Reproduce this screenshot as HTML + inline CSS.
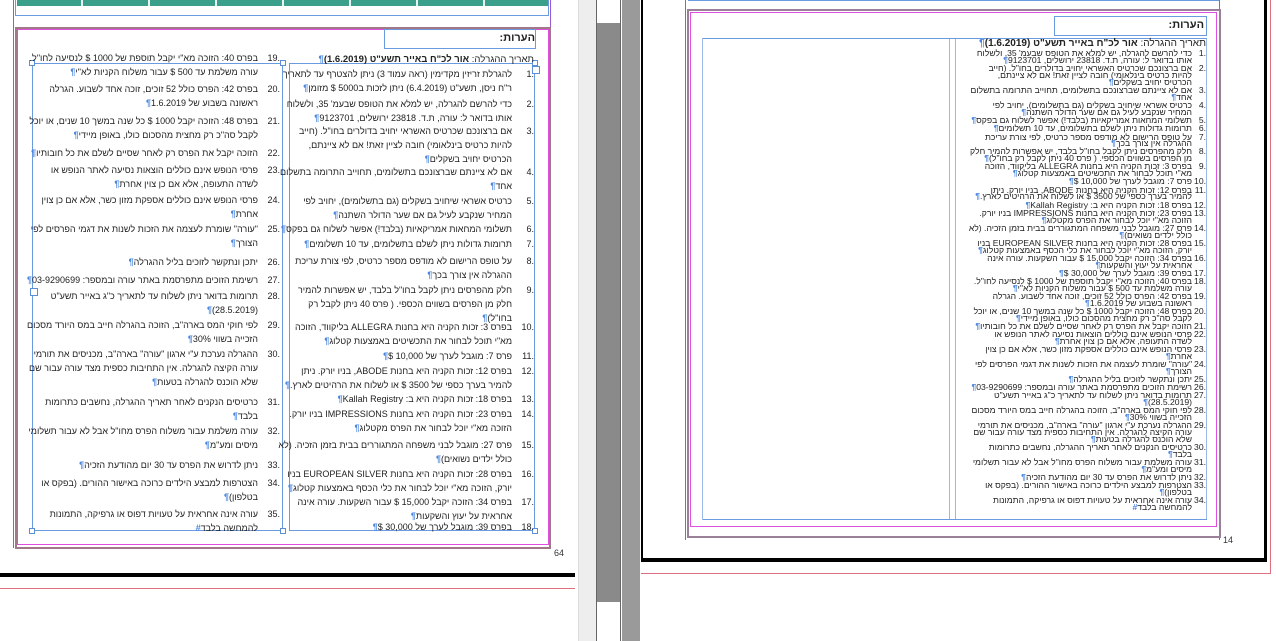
<!DOCTYPE html>
<html><head><meta charset="utf-8">
<style>
*{margin:0;padding:0;box-sizing:border-box}
body{width:1276px;height:641px;overflow:hidden;background:#fff;position:relative;font-family:"Liberation Sans","DejaVu Sans",sans-serif;color:#222}
.a{position:absolute}
.it{position:absolute;direction:rtl;text-align:right;font-size:9px;line-height:14px;white-space:nowrap;padding-right:22px}
.it b.n{position:absolute;right:0;top:0;font-weight:normal;direction:ltr}
.p{color:#4a86e0;font-weight:bold}
.hd{font-weight:bold}
.flow{position:absolute;direction:rtl;text-align:right;font-size:8.6px;white-space:nowrap}
.flow .r{position:relative;padding-right:14px;line-height:6.8px;margin-top:1.4px}
.flow .r b.n{position:absolute;right:0;top:0;font-weight:normal;direction:ltr}
.h{position:absolute;width:6px;height:6px;border:1px solid #5b8fd8;background:#fff}
</style></head><body>

<!-- ===== LEFT PANEL ===== -->
<div class="a" style="left:15px;top:0;width:534px;height:16px;border:1px solid #6a9ae0;border-top:none"></div>
<div class="a" style="left:17px;top:0;width:531px;height:6px;background:#3aa08a"></div>
<div class="a" style="left:81px;top:0;width:2px;height:6px;background:#e8f4f0"></div>
<div class="a" style="left:148px;top:0;width:2px;height:6px;background:#e8f4f0"></div>
<div class="a" style="left:215px;top:0;width:2px;height:6px;background:#e8f4f0"></div>
<div class="a" style="left:282px;top:0;width:2px;height:6px;background:#e8f4f0"></div>
<div class="a" style="left:349px;top:0;width:2px;height:6px;background:#e8f4f0"></div>
<div class="a" style="left:416px;top:0;width:2px;height:6px;background:#e8f4f0"></div>
<div class="a" style="left:483px;top:0;width:2px;height:6px;background:#e8f4f0"></div>
<div class="a" style="left:13px;top:0;width:1px;height:548px;background:#9b59d0"></div>
<div class="a" style="left:550px;top:0;width:1px;height:548px;background:#9b59d0"></div>
<div class="a" style="left:15px;top:27px;width:536px;height:522px;border:2px solid #a07888"></div>
<div class="a" style="left:17px;top:29px;width:532px;height:516px;border:1px solid #e050e0"></div>
<div class="a" style="left:384px;top:29px;width:152px;height:20px;border:1px solid #6a9ae0"></div>
<div class="a" style="left:475px;top:32px;font-size:11px;font-weight:bold;direction:rtl;width:60px;text-align:right">הערות:</div>
<!-- text frames -->
<div class="a" style="left:32px;top:63px;width:251px;height:468px;border:1px solid #6a9ae0"></div>
<div class="a" style="left:289px;top:63px;width:246px;height:468px;border:1px solid #6a9ae0"></div>
<div class="h" style="left:29px;top:60px"></div><div class="h" style="left:280px;top:60px"></div><div class="h" style="left:532px;top:60px"></div>
<div class="h" style="left:29px;top:528px"></div><div class="h" style="left:280px;top:528px"></div><div class="h" style="left:532px;top:528px"></div>
<div class="h" style="left:30px;top:288px;width:8px;height:8px"></div>
<div class="h" style="left:532px;top:66px;width:8px;height:8px"></div>
<div class="a" style="left:554px;top:548px;font-size:9px;color:#333">64</div>
<div class="a" style="left:0;top:573px;width:575px;height:4px;background:#000"></div>
<div class="a" style="left:0;top:588px;width:575px;height:1px;background:#e07080"></div>

<!-- right column (left page) -->
<div class="it" style="right:742px;top:53px;padding-right:0;font-size:9.5px">תאריך ההגרלה: <span class="hd">אור לכ"ח באייר תשע"ט (1.6.2019)</span><span class="p">¶</span></div>
<div class="it" style="right:742px;top:67px"><b class="n">1.</b>להגרלת זריזין מקדימין (ראה עמוד 3) ניתן להצטרף עד לתאריך<br>ר"ח ניסן, תשע"ט (6.4.2019) ניתן לזכות ב5000 $ מזומן<span class="p">¶</span></div>
<div class="it" style="right:742px;top:97px"><b class="n">2.</b>כדי להרשם להגרלה, יש למלא את הטופס שבעמ' 35, ולשלוח<br>אותו בדואר ל: עורה, ת.ד. 23818 ירושלים, 9123701<span class="p">¶</span></div>
<div class="it" style="right:742px;top:124px"><b class="n">3.</b>אם ברצונכם שכרטיס האשראי יחויב בדולרים בחו"ל. (חייב<br>להיות כרטיס בינלאומי) חובה לציין זאת! אם לא ציינתם,<br>הכרטיס יחויב בשקלים<span class="p">¶</span></div>
<div class="it" style="right:742px;top:165px"><b class="n">4.</b>אם לא ציינתם שברצונכם בתשלומים, תחוייב התרומה בתשלום<br>אחד<span class="p">¶</span></div>
<div class="it" style="right:742px;top:194px"><b class="n">5.</b>כרטיס אשראי שיחויב בשקלים (גם בתשלומים), יחויב לפי<br>המחיר שנקבע לעיל גם אם שער הדולר השתנה<span class="p">¶</span></div>
<div class="it" style="right:742px;top:222px"><b class="n">6.</b>תשלומי המחאות אמריקאיות (בלבד!) אפשר לשלוח גם בפקס<span class="p">¶</span></div>
<div class="it" style="right:742px;top:237px"><b class="n">7.</b>תרומות גדולות ניתן לשלם בתשלומים, עד 10 תשלומים<span class="p">¶</span></div>
<div class="it" style="right:742px;top:254px"><b class="n">8.</b>על טופס הרישום לא מודפס מספר כרטיס, לפי צורת עריכת<br>ההגרלה אין צורך בכך<span class="p">¶</span></div>
<div class="it" style="right:742px;top:283px"><b class="n">9.</b>חלק מהפרסים ניתן לקבל בחו"ל בלבד, יש אפשרות להמיר<br>חלק מן הפרסים בשווים הכספי. ( פרס 40 ניתן לקבל רק<br>בחו"ל)<span class="p">¶</span></div>
<div class="it" style="right:742px;top:320px"><b class="n">10.</b>בפרס 3: זכות הקניה היא בחנות ALLEGRA בליקווד, הזוכה<br>מא"י תוכל לבחור את התכשיטים באמצעות קטלוג<span class="p">¶</span></div>
<div class="it" style="right:742px;top:349px"><b class="n">11.</b>פרס 7: מוגבל לערך של 10,000 $<span class="p">¶</span></div>
<div class="it" style="right:742px;top:364px"><b class="n">12.</b>בפרס 12: זכות הקניה היא בחנות ABODE, בניו יורק. ניתן<br>להמיר בערך כספי של 3500 $ או לשלוח את הרהיטים לארץ.<span class="p">¶</span></div>
<div class="it" style="right:742px;top:392px"><b class="n">13.</b>בפרס 18: זכות הקניה היא ב: Kallah Registry<span class="p">¶</span></div>
<div class="it" style="right:742px;top:407px"><b class="n">14.</b>בפרס 23: זכות הקניה היא בחנות IMPRESSIONS בניו יורק.<br>הזוכה מא"י יוכל לבחור את הפרס מקטלוג<span class="p">¶</span></div>
<div class="it" style="right:742px;top:438px"><b class="n">15.</b>פרס 27: מוגבל לבני משפחה המתגוררים בבית בזמן הזכיה. (לא<br>כולל ילדים נשואים)<span class="p">¶</span></div>
<div class="it" style="right:742px;top:467px"><b class="n">16.</b>בפרס 28: זכות הקניה היא בחנות EUROPEAN SILVER בניו<br>יורק, הזוכה מא"י יוכל לבחור את כלי הכסף באמצעות קטלוג<span class="p">¶</span></div>
<div class="it" style="right:742px;top:495px"><b class="n">17.</b>בפרס 34: הזוכה יקבל 15,000 $ עבור השקעות. עורה אינה<br>אחראית על יעוץ והשקעות<span class="p">¶</span></div>
<div class="it" style="right:742px;top:520px"><b class="n">18.</b>בפרס 39: מוגבל לערך של 30,000 $<span class="p">¶</span></div>

<!-- left column (left page) -->
<div class="it" style="right:996px;top:51px"><b class="n">19.</b>בפרס 40: הזוכה מא"י יקבל תוספת של 1000 $ לנסיעה לחו"ל.<br>עורה משלמת עד 500 $ עבור משלוח הקניות לא"י<span class="p">¶</span></div>
<div class="it" style="right:996px;top:82px"><b class="n">20.</b>בפרס 42: הפרס כולל 52 זוכים, זוכה אחד לשבוע. הגרלה<br>ראשונה בשבוע של 1.6.2019<span class="p">¶</span></div>
<div class="it" style="right:996px;top:114px"><b class="n">21.</b>בפרס 48: הזוכה יקבל 1000 $ כל שנה במשך 10 שנים, או יוכל<br>לקבל סה"כ רק מחצית מהסכום כולו, באופן מיידי<span class="p">¶</span></div>
<div class="it" style="right:996px;top:146px"><b class="n">22.</b>הזוכה יקבל את הפרס רק לאחר שסיים לשלם את כל חובותיו<span class="p">¶</span></div>
<div class="it" style="right:996px;top:163px"><b class="n">23.</b>פרסי הנופש אינם כוללים הוצאות נסיעה לאתר הנופש או<br>לשדה התעופה, אלא אם כן צוין אחרת<span class="p">¶</span></div>
<div class="it" style="right:996px;top:193px"><b class="n">24.</b>פרסי הנופש אינם כוללים אספקת מזון כשר, אלא אם כן צוין<br>אחרת<span class="p">¶</span></div>
<div class="it" style="right:996px;top:222px"><b class="n">25.</b>"עורה" שומרת לעצמה את הזכות לשנות את דגמי הפרסים לפי<br>הצורך<span class="p">¶</span></div>
<div class="it" style="right:996px;top:255px"><b class="n">26.</b>יתכן ונתקשר לזוכים בליל ההגרלה<span class="p">¶</span></div>
<div class="it" style="right:996px;top:273px"><b class="n">27.</b>רשימת הזוכים מתפרסמת באתר עורה ובמספר: 03-9290699<span class="p">¶</span></div>
<div class="it" style="right:996px;top:289px"><b class="n">28.</b>תרומות בדואר ניתן לשלוח עד לתאריך כ"ג באייר תשע"ט<br>(28.5.2019)<span class="p">¶</span></div>
<div class="it" style="right:996px;top:318px"><b class="n">29.</b>לפי חוקי המס בארה"ב, הזוכה בהגרלה חייב במס היורד מסכום<br>הזכייה בשווי 30%<span class="p">¶</span></div>
<div class="it" style="right:996px;top:347px"><b class="n">30.</b>ההגרלה נערכת ע"י ארגון "עורה" בארה"ב, מכניסים את תורמי<br>עורה הקיצה להגרלה. אין התחיבות כספית מצד עורה עבור שם<br>שלא הוכנס להגרלה בטעות<span class="p">¶</span></div>
<div class="it" style="right:996px;top:395px"><b class="n">31.</b>כרטיסים הנקנים לאחר תאריך ההגרלה, נחשבים כתרומות<br>בלבד<span class="p">¶</span></div>
<div class="it" style="right:996px;top:424px"><b class="n">32.</b>עורה משלמת עבור משלוח הפרס מחו"ל אבל לא עבור תשלומי<br>מיסים ומע"מ<span class="p">¶</span></div>
<div class="it" style="right:996px;top:458px"><b class="n">33.</b>ניתן לדרוש את הפרס עד 30 יום מהודעת הזכיה<span class="p">¶</span></div>
<div class="it" style="right:996px;top:476px"><b class="n">34.</b>הצטרפות למבצע הילדים כרוכה באישור ההורים. (בפקס או<br>בטלפון)<span class="p">¶</span></div>
<div class="it" style="right:996px;top:507px"><b class="n">35.</b>עורה אינה אחראית על טעויות דפוס או גרפיקה, התמונות<br>להמחשה בלבד<span class="p">#</span></div>

<!-- ===== MIDDLE SCROLL AREA ===== -->
<div class="a" style="left:578px;top:0;width:18px;height:641px;background:#eeeeee;border-left:1px solid #ddd"></div>
<div class="a" style="left:596px;top:0;width:25px;height:641px;background:#fff;border-left:1px solid #666;border-right:1px solid #666"></div>
<div class="a" style="left:597px;top:23px;width:23px;height:579px;background:#8a8a8a"></div>
<div class="a" style="left:622px;top:0;width:18px;height:641px;background:#9a9a9a"></div>

<!-- ===== RIGHT PANEL ===== -->
<div class="a" style="left:641px;top:0;width:2px;height:561px;background:#000"></div>
<div class="a" style="left:641px;top:558px;width:625px;height:4px;background:#000"></div>
<div class="a" style="left:1264px;top:0;width:3px;height:562px;background:#000"></div>
<div class="a" style="left:641px;top:573px;width:630px;height:1px;background:#e07080"></div>
<div class="a" style="left:1270px;top:0;width:1px;height:574px;background:#e07080"></div>
<div class="a" style="left:688px;top:0;width:532px;height:1px;background:#6a9ae0"></div>
<div class="a" style="left:685px;top:0;width:1px;height:540px;background:#9b59d0"></div>
<div class="a" style="left:1219px;top:0;width:1px;height:540px;background:#9b59d0"></div>
<div class="a" style="left:687px;top:9px;width:534px;height:529px;border:2px solid #9a8098"></div>
<div class="a" style="left:690px;top:12px;width:527px;height:515px;border:1px solid #e050e0"></div>
<div class="a" style="left:1054px;top:16px;width:153px;height:20px;border:1px solid #6a9ae0"></div>
<div class="a" style="left:1140px;top:19px;font-size:11px;font-weight:bold;direction:rtl;width:64px;text-align:right">הערות:</div>
<div class="a" style="left:702px;top:38px;width:248px;height:482px;border:1px solid #9ab8e8"></div>
<div class="a" style="left:955px;top:38px;width:252px;height:482px;border:1px solid #9ab8e8"></div>
<div class="a" style="left:703px;top:38px;width:504px;height:1px;background:#6a9ae0"></div>
<div class="a" style="left:703px;top:519px;width:504px;height:1px;background:#6a9ae0"></div>
<div class="a" style="left:1223px;top:535px;font-size:9px;color:#333">14</div>

<div class="a" style="right:70px;top:40px;direction:rtl;font-size:10px;white-space:nowrap;line-height:8px">תאריך ההגרלה: <span class="hd">אור לכ"ח באייר תשע"ט (1.6.2019)</span><span class="p">¶</span></div>
<div class="flow" style="right:70px;top:49px">
<div class="r"><b class="n">1.</b>כדי להרשם להגרלה, יש למלא את הטופס שבעמ' 35, ולשלוח<br>אותו בדואר ל: עורה, ת.ד. 23818 ירושלים, 9123701<span class="p">¶</span></div>
<div class="r"><b class="n">2.</b>אם ברצונכם שכרטיס האשראי יחויב בדולרים בחו"ל. (חייב<br>להיות כרטיס בינלאומי) חובה לציין זאת! אם לא ציינתם,<br>הכרטיס יחויב בשקלים<span class="p">¶</span></div>
<div class="r"><b class="n">3.</b>אם לא ציינתם שברצונכם בתשלומים, תחוייב התרומה בתשלום<br>אחד<span class="p">¶</span></div>
<div class="r"><b class="n">4.</b>כרטיס אשראי שיחויב בשקלים (גם בתשלומים), יחויב לפי<br>המחיר שנקבע לעיל גם אם שער הדולר השתנה<span class="p">¶</span></div>
<div class="r"><b class="n">5.</b>תשלומי המחאות אמריקאיות (בלבד!) אפשר לשלוח גם בפקס<span class="p">¶</span></div>
<div class="r"><b class="n">6.</b>תרומות גדולות ניתן לשלם בתשלומים, עד 10 תשלומים<span class="p">¶</span></div>
<div class="r"><b class="n">7.</b>על טופס הרישום לא מודפס מספר כרטיס, לפי צורת עריכת<br>ההגרלה אין צורך בכך<span class="p">¶</span></div>
<div class="r"><b class="n">8.</b>חלק מהפרסים ניתן לקבל בחו"ל בלבד, יש אפשרות להמיר חלק<br>מן הפרסים בשווים הכספי. ( פרס 40 ניתן לקבל רק בחו"ל)<span class="p">¶</span></div>
<div class="r"><b class="n">9.</b>בפרס 3: זכות הקניה היא בחנות ALLEGRA בליקווד, הזוכה<br>מא"י תוכל לבחור את התכשיטים באמצעות קטלוג<span class="p">¶</span></div>
<div class="r"><b class="n">10.</b>פרס 7: מוגבל לערך של 10,000 $<span class="p">¶</span></div>
<div class="r"><b class="n">11.</b>בפרס 12: זכות הקניה היא בחנות ABODE, בניו יורק. ניתן<br>להמיר בערך כספי של 3500 $ או לשלוח את הרהיטים לארץ.<span class="p">¶</span></div>
<div class="r"><b class="n">12.</b>בפרס 18: זכות הקניה היא ב: Kallah Registry<span class="p">¶</span></div>
<div class="r"><b class="n">13.</b>בפרס 23: זכות הקניה היא בחנות IMPRESSIONS בניו יורק.<br>הזוכה מא"י יוכל לבחור את הפרס מקטלוג<span class="p">¶</span></div>
<div class="r"><b class="n">14.</b>פרס 27: מוגבל לבני משפחה המתגוררים בבית בזמן הזכיה. (לא<br>כולל ילדים נשואים)<span class="p">¶</span></div>
<div class="r"><b class="n">15.</b>בפרס 28: זכות הקניה היא בחנות EUROPEAN SILVER בניו<br>יורק, הזוכה מא"י יוכל לבחור את כלי הכסף באמצעות קטלוג<span class="p">¶</span></div>
<div class="r"><b class="n">16.</b>בפרס 34: הזוכה יקבל 15,000 $ עבור השקעות. עורה אינה<br>אחראית על יעוץ והשקעות<span class="p">¶</span></div>
<div class="r"><b class="n">17.</b>בפרס 39: מוגבל לערך של 30,000 $<span class="p">¶</span></div>
<div class="r"><b class="n">18.</b>בפרס 40: הזוכה מא"י יקבל תוספת של 1000 $ לנסיעה לחו"ל.<br>עורה משלמת עד 500 $ עבור משלוח הקניות לא"י<span class="p">¶</span></div>
<div class="r"><b class="n">19.</b>בפרס 42: הפרס כולל 52 זוכים, זוכה אחד לשבוע. הגרלה<br>ראשונה בשבוע של 1.6.2019<span class="p">¶</span></div>
<div class="r"><b class="n">20.</b>בפרס 48: הזוכה יקבל 1000 $ כל שנה במשך 10 שנים, או יוכל<br>לקבל סה"כ רק מחצית מהסכום כולו, באופן מיידי<span class="p">¶</span></div>
<div class="r"><b class="n">21.</b>הזוכה יקבל את הפרס רק לאחר שסיים לשלם את כל חובותיו<span class="p">¶</span></div>
<div class="r"><b class="n">22.</b>פרסי הנופש אינם כוללים הוצאות נסיעה לאתר הנופש או<br>לשדה התעופה, אלא אם כן צוין אחרת<span class="p">¶</span></div>
<div class="r"><b class="n">23.</b>פרסי הנופש אינם כוללים אספקת מזון כשר, אלא אם כן צוין<br>אחרת<span class="p">¶</span></div>
<div class="r"><b class="n">24.</b>"עורה" שומרת לעצמה את הזכות לשנות את דגמי הפרסים לפי<br>הצורך<span class="p">¶</span></div>
<div class="r"><b class="n">25.</b>יתכן ונתקשר לזוכים בליל ההגרלה<span class="p">¶</span></div>
<div class="r"><b class="n">26.</b>רשימת הזוכים מתפרסמת באתר עורה ובמספר: 03-9290699<span class="p">¶</span></div>
<div class="r"><b class="n">27.</b>תרומות בדואר ניתן לשלוח עד לתאריך כ"ג באייר תשע"ט<br>(28.5.2019)<span class="p">¶</span></div>
<div class="r"><b class="n">28.</b>לפי חוקי המס בארה"ב, הזוכה בהגרלה חייב במס היורד מסכום<br>הזכייה בשווי 30%<span class="p">¶</span></div>
<div class="r"><b class="n">29.</b>ההגרלה נערכת ע"י ארגון "עורה" בארה"ב, מכניסים את תורמי<br>עורה הקיצה להגרלה. אין התחיבות כספית מצד עורה עבור שם<br>שלא הוכנס להגרלה בטעות<span class="p">¶</span></div>
<div class="r"><b class="n">30.</b>כרטיסים הנקנים לאחר תאריך ההגרלה, נחשבים כתרומות<br>בלבד<span class="p">¶</span></div>
<div class="r"><b class="n">31.</b>עורה משלמת עבור משלוח הפרס מחו"ל אבל לא עבור תשלומי<br>מיסים ומע"מ<span class="p">¶</span></div>
<div class="r"><b class="n">32.</b>ניתן לדרוש את הפרס עד 30 יום מהודעת הזכיה<span class="p">¶</span></div>
<div class="r"><b class="n">33.</b>הצטרפות למבצע הילדים כרוכה באישור ההורים. (בפקס או<br>בטלפון)<span class="p">¶</span></div>
<div class="r"><b class="n">34.</b>עורה אינה אחראית על טעויות דפוס או גרפיקה, התמונות<br>להמחשה בלבד<span class="p">#</span></div>
</div>
</body></html>
